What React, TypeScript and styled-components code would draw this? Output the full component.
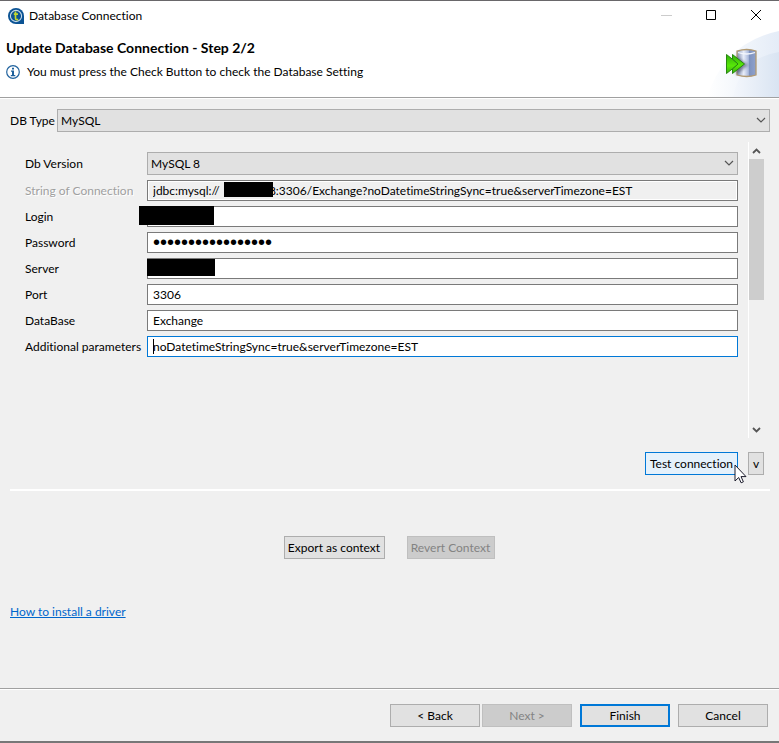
import React, { useState } from "react";
import styled, { createGlobalStyle, css } from "styled-components";

const GlobalStyle = createGlobalStyle`
  *, *::before, *::after { box-sizing: border-box; }
  body { margin: 0; background: #f0f0f0; }
  body, button, input, select {
    font-family: Lato, "Open Sans", sans-serif;
    font-size: 12px;
    line-height: 16px;
    font-variant-ligatures: none;
    color: #000;
  }
`;

const Window = styled.div`
  display: flex;
  flex-direction: column;
  min-height: 100vh;
  background: #f0f0f0;
  border-top: 1px solid #69676a;
  border-bottom: 2px solid #777;
`;

const TitleBar = styled.header`
  display: flex;
  align-items: center;
  height: 29px;
  padding-left: 8px;
  background: #fff;
`;

const TitleText = styled.span`
  flex: 1;
  padding-left: 5px;
`;

const CaptionButton = styled.button`
  display: flex;
  align-items: center;
  justify-content: center;
  width: 45px;
  height: 29px;
  padding: 0;
  border: 0;
  background: transparent;
`;

const Banner = styled.section`
  display: flex;
  justify-content: space-between;
  height: 68px;
  padding-left: 6px;
  background: #fff;
  border-bottom: 1px solid #a0a0a0;
`;

const BannerText = styled.div`
  display: flex;
  flex-direction: column;
  gap: 7px;
  padding-top: 9px;
`;

const Heading = styled.h1`
  margin: 0;
  font-size: 14px;
  line-height: 18px;
  font-weight: 700;
`;

const Message = styled.p`
  display: flex;
  align-items: center;
  gap: 7px;
  margin: 0;
`;

const Body = styled.main`
  flex: 1;
  display: flex;
  flex-direction: column;
  padding: 10px 9px 0 10px;
  border-top: 1px solid #fff;
`;

const TypeRow = styled.div`
  display: grid;
  grid-template-columns: 42px 1fr;
  column-gap: 5px;
  align-items: center;
`;

const SelectWrap = styled.div`
  position: relative;
  display: flex;
`;

const Select = styled.select`
  appearance: none;
  width: 100%;
  height: 23px;
  padding: 0 20px 0 3px;
  border: 1px solid #adadad;
  border-radius: 0;
  background: #e1e1e1;
`;

const SelectArrow = styled.svg`
  position: absolute;
  right: 4px;
  top: 8px;
  pointer-events: none;
`;

const ScrollArea = styled.div`
  display: flex;
  gap: 10px;
  height: 296px;
  margin-top: 10px;
  padding-right: 6px;
`;

const Form = styled.form`
  flex: 1;
  display: flex;
  flex-direction: column;
  gap: 5px;
  padding: 10px 0 0 15px;
`;

const FormRow = styled.div`
  display: grid;
  grid-template-columns: 117px 1fr;
  column-gap: 5px;
  align-items: center;
`;

const Label = styled.label<{ $muted?: boolean }>`
  white-space: nowrap;
  ${(p) => p.$muted && css`color: #a0a0a0; text-shadow: 1px 1px 0 #fff;`}
`;

const FieldWrap = styled.div`
  position: relative;
  display: flex;
`;

const TextInput = styled.input<{ $active?: boolean }>`
  width: 100%;
  height: 21px;
  padding: 0 5px;
  border: 1px solid ${(p) => (p.$active ? "#0078d7" : "#7a7a7a")};
  border-radius: 0;
  outline: 0;
  background: #fff;
  &:read-only {
    background: #f0f0f0;
    box-shadow: inset 0 0 0 1px #fff;
  }
  &[type="password"] {
    font-family: "Liberation Sans", sans-serif;
    font-size: 20px;
  }
`;

const Redaction = styled.span<{ $left: number; $top: number; $width: number; $height: number }>`
  position: absolute;
  left: ${(p) => p.$left}px;
  top: ${(p) => p.$top}px;
  width: ${(p) => p.$width}px;
  height: ${(p) => p.$height}px;
  background: #000;
`;

const Caret = styled.span`
  position: absolute;
  left: 6px;
  top: 3px;
  width: 1px;
  height: 15px;
  background: #000;
`;

const ScrollBar = styled.div`
  display: flex;
  flex-direction: column;
  width: 16px;
  border-left: 1px solid #fff;
`;

const ScrollButton = styled.button`
  display: flex;
  align-items: center;
  justify-content: center;
  height: 17px;
  padding: 0;
  border: 0;
  background: transparent;
`;

const ScrollTrack = styled.div`
  flex: 1;
`;

const ScrollThumb = styled.div`
  height: 54%;
  background: #cdcdcd;
`;

type Variant = "normal" | "default" | "hover";

const Button = styled.button<{ $variant?: Variant; $width?: number }>`
  position: relative;
  height: 23px;
  width: ${(p) => (p.$width ? `${p.$width}px` : "auto")};
  padding: 0;
  white-space: nowrap;
  border: 1px solid #adadad;
  border-radius: 0;
  background: #e1e1e1;
  ${(p) => p.$variant === "default" && css`border: 2px solid #0078d7;`}
  ${(p) => p.$variant === "hover" && css`border-color: #0078d7; background: #e5f1fb;`}
  &:disabled {
    color: #838383;
    background: #cccccc;
    border-color: #bfbfbf;
  }
`;

const Cursor = styled.svg`
  position: absolute;
  left: 88px;
  top: 11px;
  pointer-events: none;
`;

const TestRow = styled.div`
  display: flex;
  justify-content: flex-end;
  gap: 10px;
  padding: 14px 6px 14px 0;
`;

const Divider = styled.hr`
  width: 100%;
  height: 2px;
  margin: 0;
  border: 0;
  background: #fff;
`;

const ContextRow = styled.div`
  display: flex;
  justify-content: center;
  gap: 22px;
  margin-top: 45px;
  padding-right: 2px;
`;

const Link = styled.a`
  align-self: flex-start;
  margin-top: 45px;
  color: #0066cc;
  text-decoration: underline;
`;

const Footer = styled.footer`
  display: flex;
  justify-content: flex-end;
  padding: 15px 11px 14px 0;
  border-top: 1px solid #a0a0a0;
  box-shadow: inset 0 1px 0 #fff;
`;

const FooterGroup = styled.div`
  display: flex;
  gap: 2px;
  margin-right: 8px;
  & + & { gap: 8px; margin-right: 0; }
`;

const AppIcon = () => (
  <svg width="16" height="16" viewBox="0 0 16 16" aria-hidden="true">
    <path d="M8 0a8 8 0 1 0 0 16h8V8A8 8 0 0 0 8 0Z" fill="#0b5394" />
    <circle cx="8" cy="8" r="5.6" fill="none" stroke="#c5d8e8" strokeWidth="1.1" />
    <path d="M7.5 3.600v6.600q0 1.500 1.500 1.500h1.200M5.800 6.200h4.200" fill="none" stroke="#c3d82c" strokeWidth="1.7" />
  </svg>
);

const InfoIcon = () => (
  <svg width="14" height="14" viewBox="0 0 14 14" aria-hidden="true">
    <circle cx="7" cy="7" r="6.3" fill="#fff" stroke="#23649f" strokeWidth="1.2" />
    <path d="M6 2.800h2v1.700H6ZM5 5.600h3v4.400h1.300v1.200H4.800V10H6V6.800H5Z" fill="#1d609c" />
  </svg>
);

const BannerArt = () => (
  <svg width="76" height="67" viewBox="0 0 76 67" aria-hidden="true">
    <defs>
      <linearGradient id="outer" x1="0" x2="1" y1="0" y2="0">
        <stop offset="0" stopColor="#fff" />
        <stop offset="1" stopColor="#e4ecf7" />
      </linearGradient>
      <linearGradient id="inner" x1="0" x2="1" y1="0" y2="0">
        <stop offset="0" stopColor="#f4f7fc" />
        <stop offset="1" stopColor="#d9e4f2" />
      </linearGradient>
      <linearGradient id="steel" x1="0" x2="1" y1="0" y2="0">
        <stop offset="0" stopColor="#8794b5" />
        <stop offset="0.35" stopColor="#e9eefa" />
        <stop offset="0.6" stopColor="#aab9dc" />
        <stop offset="0.65" stopColor="#7f93bf" />
        <stop offset="1" stopColor="#8fa2cc" />
      </linearGradient>
      <linearGradient id="green" x1="0" x2="0" y1="0" y2="1">
        <stop offset="0" stopColor="#32b20b" />
        <stop offset="0.6" stopColor="#58e808" />
        <stop offset="1" stopColor="#36b00c" />
      </linearGradient>
      <filter id="soft" x="-50%" y="-50%" width="200%" height="200%">
        <feGaussianBlur stdDeviation="1.5" />
      </filter>
    </defs>
    <path d="M4 67Q22 12 76 1V67Z" fill="url(#outer)" />
    <path d="M30 67Q38 28 76 22V67Z" fill="url(#inner)" />
    <path d="M34 21q10-3 19 0v24q-9 3-19 0Z" fill="url(#steel)" stroke="#b29a72" strokeWidth="1.3" />
    <path d="M35 22.500q9 3 17 0" fill="none" stroke="#f3f6fc" strokeWidth="1.3" />
    <path d="M33 26l12 9-12 10Z" fill="#46506a" opacity="0.65" filter="url(#soft)" />
    <path d="M23.500 24.500v19l12-9.500Z" fill="url(#green)" stroke="#27870f" />
    <path d="M29.500 24.500l12 9.500-12 9.500v-4.500l5.500-5-5.500-5Z" fill="url(#green)" stroke="#27870f" />
  </svg>
);

const Chevron = () => (
  <SelectArrow width="10" height="7" viewBox="0 0 10 7" aria-hidden="true">
    <path d="M1 1l4 4 4-4" fill="none" stroke="#555" strokeWidth="1.2" />
  </SelectArrow>
);

type Field = {
  id: string;
  label: string;
  value: string;
  type?: string;
  readOnly?: boolean;
  active?: boolean;
  redaction?: [number, number, number, number];
};

const FIELDS: Field[] = [
  {
    id: "url",
    label: "String of Connection",
    value: `jdbc:mysql://${"\u00a0".repeat(16)}8:3306/Exchange?noDatetimeStringSync=true&serverTimezone=EST`,
    readOnly: true,
    redaction: [77, 2, 49, 15],
  },
  { id: "login", label: "Login", value: "", redaction: [-8, 0, 75, 19] },
  { id: "password", label: "Password", value: "x".repeat(17), type: "password" },
  { id: "server", label: "Server", value: "", redaction: [0, 1, 68, 17] },
  { id: "port", label: "Port", value: "3306" },
  { id: "database", label: "DataBase", value: "Exchange" },
  {
    id: "params",
    label: "Additional parameters",
    value: "noDatetimeStringSync=true&serverTimezone=EST",
    active: true,
  },
];

const FieldRow = ({ field }: { field: Field }) => {
  const [value, setValue] = useState(field.value);
  return (
    <FormRow>
      <Label htmlFor={field.id} $muted={field.readOnly}>{field.label}</Label>
      <FieldWrap>
        <TextInput
          id={field.id}
          type={field.type ?? "text"}
          value={value}
          readOnly={field.readOnly}
          autoComplete="off"
          spellCheck={false}
          $active={field.active}
          onChange={(e) => setValue(e.target.value)}
        />
        {field.redaction && (
          <Redaction
            $left={field.redaction[0]}
            $top={field.redaction[1]}
            $width={field.redaction[2]}
            $height={field.redaction[3]}
          />
        )}
        {field.active && <Caret />}
      </FieldWrap>
    </FormRow>
  );
};

export default function App() {
  return (
    <>
      <GlobalStyle />
      <Window>
        <TitleBar>
          <AppIcon />
          <TitleText>Database Connection</TitleText>
          <CaptionButton aria-label="Minimize" disabled>
            <svg width="11" height="11"><path d="M0 5.500h11" stroke="#ccc" /></svg>
          </CaptionButton>
          <CaptionButton aria-label="Maximize">
            <svg width="11" height="11"><path d="M.5.5h9v9h-9Z" fill="none" stroke="#000" /></svg>
          </CaptionButton>
          <CaptionButton aria-label="Close">
            <svg width="11" height="11"><path d="M0 0l10 10M10 0L0 10" stroke="#000" /></svg>
          </CaptionButton>
        </TitleBar>
        <Banner>
          <BannerText>
            <Heading>Update Database Connection - Step 2/2</Heading>
            <Message><InfoIcon />You must press the Check Button to check the Database Setting</Message>
          </BannerText>
          <BannerArt />
        </Banner>
        <Body>
          <TypeRow>
            <Label htmlFor="dbtype">DB Type</Label>
            <SelectWrap>
              <Select id="dbtype"><option>MySQL</option></Select>
              <Chevron />
            </SelectWrap>
          </TypeRow>
          <ScrollArea>
            <Form onSubmit={(e) => e.preventDefault()}>
              <FormRow>
                <Label htmlFor="version">Db Version</Label>
                <SelectWrap>
                  <Select id="version"><option>MySQL 8</option></Select>
                  <Chevron />
                </SelectWrap>
              </FormRow>
              {FIELDS.map((f) => <FieldRow key={f.id} field={f} />)}
            </Form>
            <ScrollBar>
              <ScrollButton aria-label="Scroll up">
                <svg width="9" height="6"><path d="M1 5l3.500-3.500L8 5" fill="none" stroke="#555" strokeWidth="1.8" /></svg>
              </ScrollButton>
              <ScrollTrack><ScrollThumb /></ScrollTrack>
              <ScrollButton aria-label="Scroll down">
                <svg width="9" height="6"><path d="M1 1l3.500 3.500L8 1" fill="none" stroke="#555" strokeWidth="1.8" /></svg>
              </ScrollButton>
            </ScrollBar>
          </ScrollArea>
          <TestRow>
            <Button $variant="hover" $width={93}>
              Test connection
              <Cursor width="13" height="20" viewBox="0 0 13 20" aria-hidden="true">
                <path d="M1 1v16l3.700-3.500 2.400 5.300 2.300-1-2.400-5.200H12Z" fill="#fff" stroke="#1c1c2c" />
              </Cursor>
            </Button>
            <Button $width={16} aria-label="More test options">v</Button>
          </TestRow>
          <Divider />
          <ContextRow>
            <Button $width={101}>Export as context</Button>
            <Button $width={88} disabled>Revert Context</Button>
          </ContextRow>
          <Link href="#driver">How to install a driver</Link>
        </Body>
        <Footer>
          <FooterGroup>
            <Button $width={90}>&lt; Back</Button>
            <Button $width={90} disabled>Next &gt;</Button>
          </FooterGroup>
          <FooterGroup>
            <Button $width={90} $variant="default">Finish</Button>
            <Button $width={90}>Cancel</Button>
          </FooterGroup>
        </Footer>
      </Window>
    </>
  );
}
